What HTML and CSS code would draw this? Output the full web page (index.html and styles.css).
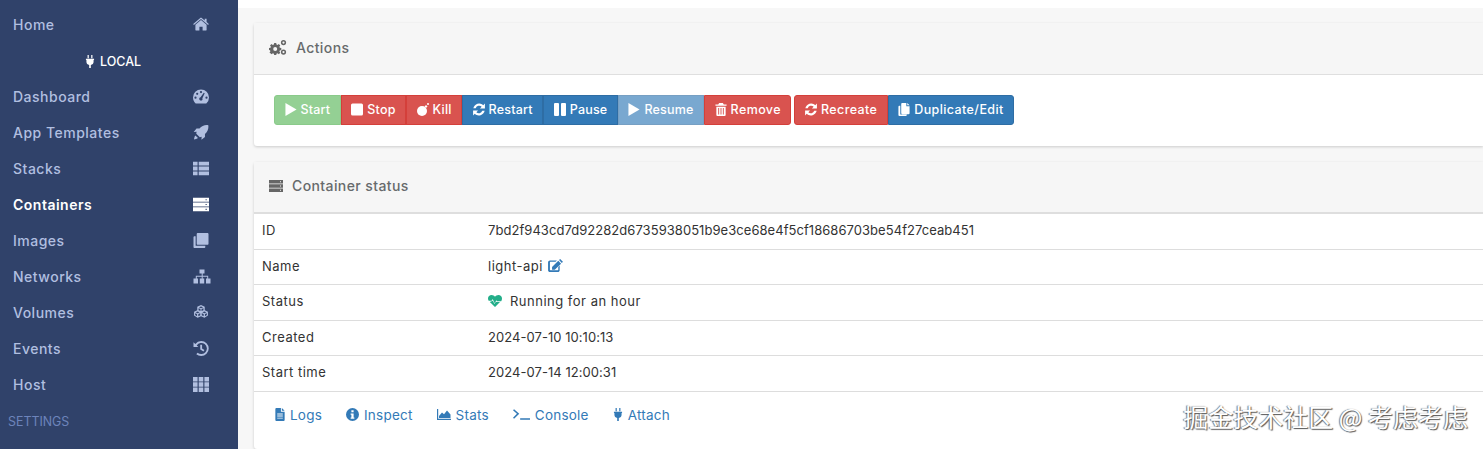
FILE: index.html
```html
<!DOCTYPE html>
<html lang="en">
<head>
<meta charset="utf-8">
<title>Container details</title>
<link rel="stylesheet" href="styles.css">
</head>
<body>
<svg class="defs" width="0" height="0" aria-hidden="true">
  <defs>
    <symbol id="i-home" viewBox="0 0 16 14"><path d="M8 2.600 2.400 7.300V12.400c0 .3.200.5.500.5H6.400V9.300h3.200v3.600h3.500c.3 0 .5-.2.500-.5V7.300zM15.800 6.500 13.600 4.600V1.200h-1.900v1.800L9 .7C8.400.2 7.600.2 7 .7L.2 6.500l.7.900L8 1.600l7.100 5.800z"/></symbol>
    <symbol id="i-plug" viewBox="0 0 12 16"><path d="M3 0h1.500v4H3zM7.500 0H9v4H7.500zM1 4.500h10V6h-.6v2.200c0 2-1.400 3.700-3.400 4V16H5v-3.800c-2-.3-3.400-2-3.400-4V6H1z"/></symbol>
    <symbol id="i-gauge" viewBox="0 0 16 14"><path fill-rule="evenodd" d="M8 0a8 8 0 0 0-8 8c0 2.400 1 4.500 2.700 6h10.600A8 8 0 0 0 16 8a8 8 0 0 0-8-8zM2.500 9.300a1.100 1.100 0 1 1 0-2.200 1.100 1.100 0 0 1 0 2.200zM4.200 5.400a1.100 1.100 0 1 1 0-2.200 1.100 1.100 0 0 1 0 2.200zM8 3.700a1.100 1.100 0 1 1 0-2.200 1.100 1.100 0 0 1 0 2.200zM13.500 9.300a1.100 1.100 0 1 1 0-2.200 1.100 1.100 0 0 1 0 2.200zM9.500 10.200a1.700 1.700 0 0 1-3 0 1.700 1.700 0 0 1 1-2.400L10.800 3.200l.9.500-2.300 5z"/></symbol>
    <symbol id="i-rocket" viewBox="0 0 14 14"><path d="M13.800.2C10.500-.3 7.700.9 5.600 3.300H2.800L.2 6.600l2.800-.2c-.3.700-.4 1.300-.4 1.700l3.300 3.300c.5 0 1-.2 1.700-.4l-.2 2.800 3.300-2.600V8.400c2.400-2.100 3.600-4.900 3.100-8.200zM1.800 9.800C.9 10.700.6 12.500.5 13.500c1-.1 2.800-.4 3.700-1.300z"/></symbol>
    <symbol id="i-table" viewBox="0 0 14 12"><path d="M0 0h4v3.400H0zM5 0h9v3.400H5zM0 4.300h4v3.400H0zM5 4.300h9v3.400H5zM0 8.600h4V12H0zM5 8.600h9V12H5z"/></symbol>
    <symbol id="i-server" viewBox="0 0 14 12"><path fill-rule="evenodd" d="M0 0h14v3.500H0zM0 4.200h14v3.600H0zM0 8.500h14V12H0zM11 1.300v1h1v-1zM11 5.500v1h1v-1zM11 9.800v1h1v-1z"/></symbol>
    <symbol id="i-clone" viewBox="0 0 14 14"><path d="M4 0h9c.6 0 1 .4 1 1v9c0 .6-.4 1-1 1H4c-.6 0-1-.4-1-1V1c0-.6.4-1 1-1zM2 3v9h9v1c0 .6-.4 1-1 1H1c-.6 0-1-.4-1-1V4c0-.6.4-1 1-1z"/></symbol>
    <symbol id="i-copy" viewBox="0 0 12 14"><path d="M4 0h4.500v3.500H12V11c0 .5-.4 1-1 1H4c-.6 0-1-.5-1-1V1c0-.6.4-1 1-1zM9.500 0 12 2.500H9.500zM2 3v9.500h7V13c0 .6-.4 1-1 1H1c-.6 0-1-.4-1-1V4c0-.6.4-1 1-1z"/></symbol>
    <symbol id="i-sitemap" viewBox="0 0 18 14"><path d="M6.500 0h5v4H9.700v2.200H15.200V9H17.500v5h-4.500V9h1.200V7.200H9.700V9H11.200v5H6.800V9h1.900V7.200H3.800V9H5v5H.5V9h2.300V6.200h5.900V4H6.500z"/></symbol>
    <symbol id="i-cubes" viewBox="0 0 15 14"><path fill-rule="evenodd" d="M7.500 0 11 1.500v3.400l3 1.300v3.700L10.700 12 7.500 10.400 4.300 12 1 9.900V6.200l3-1.300V1.500zM7.500 1.300 5.500 2.100l2 .8 2-.8zM4.300 6 2.400 6.800l1.900.8 1.900-.8zM10.700 6l-1.900.8 1.900.8 1.900-.8zM2 7.700v1.700l1.800 1.100V8.400zM5 8.400v2.100l1.800-1V7.600zM8.200 7.600v1.900l1.800 1V8.400zM13 7.700l-1.800.7v2.100l1.800-1.100zM5.200 3v1.900l1.800.7V3.700zM9.800 3 8 3.700v1.900l1.800-.7z"/></symbol>
    <symbol id="i-history" viewBox="0 0 14 14"><path d="M7.200 0A7 7 0 0 1 7.200 14 7 7 0 0 1 2.600 12.300l1.200-1.400A5.200 5.200 0 1 0 3 4.100L4.600 5.700H0V1.100L1.700 2.800A7 7 0 0 1 7.200 0zM6.300 3.500H8V7l2.200 1.400-.9 1.400-3-1.900z"/></symbol>
    <symbol id="i-th" viewBox="0 0 14 13"><path d="M0 0h4v3.800H0zM5 0h4v3.800H5zM10 0h4v3.800h-4zM0 4.600h4v3.800H0zM5 4.600h4v3.800H5zM10 4.600h4v3.800h-4zM0 9.200h4V13H0zM5 9.200h4V13H5zM10 9.200h4V13h-4z"/></symbol>
    <symbol id="i-cogs" viewBox="0 0 18 15"><path fill-rule="evenodd" d="M5.200 3h2l.3 1.500 1 .4L9.800 4l1.500 1.500-.9 1.300.4 1 1.500.3v2l-1.500.3-.4 1 .9 1.300-1.500 1.500-1.300-.9-1 .4-.3 1.500h-2l-.3-1.500-1-.4-1.300.9L.5 12.500l.9-1.300-.4-1L0 10V8l1.500-.3.400-1-.9-1.300L2.500 4l1.300.9 1-.4zM6.200 7a2 2 0 1 0 0 4 2 2 0 0 0 0-4zM14.500 0a2.600 2.600 0 1 1 0 5.200 2.600 2.600 0 0 1 0-5.200zM14.500 1.500a1.100 1.100 0 1 0 0 2.200 1.100 1.100 0 0 0 0-2.200zM14.500 9.500a2.600 2.600 0 1 1 0 5.200 2.600 2.600 0 0 1 0-5.200zM14.500 11a1.100 1.100 0 1 0 0 2.200 1.100 1.100 0 0 0 0-2.200z"/></symbol>
    <symbol id="i-play" viewBox="0 0 12 14"><path d="M0 0 12 7 0 14z"/></symbol>
    <symbol id="i-stop" viewBox="0 0 12 12"><rect width="12" height="12" rx="1.500"/></symbol>
    <symbol id="i-bomb" viewBox="0 0 12 13"><circle cx="5" cy="8" r="5"/><path d="M7.500 3.500 9 2l1.500 1.500L9 5z"/><circle cx="11" cy="1" r="1"/></symbol>
    <symbol id="i-refresh" viewBox="0 0 14 14"><path d="M13.900 0v5.800H8.100l2-2A4.200 4.200 0 0 0 3.200 5.400H.4a7 7 0 0 1 11.600-3.500zM.1 14V8.200h5.800l-2 2a4.200 4.200 0 0 0 6.900-1.600h2.800a7 7 0 0 1-11.600 3.500z"/></symbol>
    <symbol id="i-pause" viewBox="0 0 12 13"><rect width="5" height="13" rx="1"/><rect x="7" width="5" height="13" rx="1"/></symbol>
    <symbol id="i-trash" viewBox="0 0 12 14"><path fill-rule="evenodd" d="M4 0h4l1 1.500h3V3H0V1.500h3zM1 4h10v9c0 .6-.4 1-1 1H2c-.6 0-1-.4-1-1zM3 5.500v7h1v-7zM5.500 5.500v7h1v-7zM8 5.500v7h1v-7z"/></symbol>
    <symbol id="i-edit" viewBox="0 0 16 14"><path d="M2 1.500h7.500L8 3H2.500c-.3 0-.5.200-.5.500v8c0 .3.200.5.500.5h8c.3 0 .5-.2.500-.5V8.500l1.500-1.500v5c0 1.100-.9 2-2 2H2c-1.100 0-2-.9-2-2V3.500c0-1.100.9-2 2-2zM13 0l3 3-1.200 1.200-3-3zM11 2l3 3-6.800 6.500H4.300V8.500z"/></symbol>
    <symbol id="i-heartbeat" viewBox="0 0 14 12"><path d="M3.600 0C1.600 0 0 1.500 0 3.500c0 .8.300 1.500.7 2.200h3l1-1.800L6.600 8.200l1.800-3 .6 1.100h4.200c.5-.8.800-1.700.8-2.800C14 1.500 12.400 0 10.400 0 9 0 7.800.7 7 1.800 6.200.7 5 0 3.600 0zM1.800 7 7 12l5-5H8.300l-.3-.5-1.500 2.500-1.800-3.600-.3.600z"/></symbol>
    <symbol id="i-file" viewBox="0 0 10 14"><path fill-rule="evenodd" d="M0 1c0-.6.400-1 1-1h5v4h4v9c0 .6-.4 1-1 1H1c-.6 0-1-.4-1-1zM7 0l3 3H7zM2 6v1h6V6zM2 8.200v1h6v-1zM2 10.400v1h6v-1z"/></symbol>
    <symbol id="i-info" viewBox="0 0 14 14"><path fill-rule="evenodd" d="M7 0a7 7 0 1 1 0 14A7 7 0 0 1 7 0zM5.800 2.300v2.200h2.400V2.300zM5 5.800v1.400h.8v3H5v1.400h4v-1.400h-.8V5.800z"/></symbol>
    <symbol id="i-chart" viewBox="0 0 14 11"><path d="M0 0h1.200v9.700H14V11H0zM2 9V7L5 3.500l2 1.700L10 1.500l3.500 4V9z"/></symbol>
    <symbol id="i-terminal" viewBox="0 0 19 12"><path d="M1.200 0 7 5.200 1.200 10.800 0 9.500 4.400 5.200 0 1.300zM8 10.200h11V12H8z"/></symbol>
  </defs>
</svg>

<div class="layout">
  <nav class="sidebar">
    <a class="nav-row">Home<svg class="nav-icon"><use href="#i-home"/></svg></a>
    <div class="endpoint"><svg class="endpoint-icon"><use href="#i-plug"/></svg>LOCAL</div>
    <a class="nav-row">Dashboard<svg class="nav-icon"><use href="#i-gauge"/></svg></a>
    <a class="nav-row">App Templates<svg class="nav-icon"><use href="#i-rocket"/></svg></a>
    <a class="nav-row">Stacks<svg class="nav-icon"><use href="#i-table"/></svg></a>
    <a class="nav-row active">Containers<svg class="nav-icon"><use href="#i-server"/></svg></a>
    <a class="nav-row">Images<svg class="nav-icon"><use href="#i-clone"/></svg></a>
    <a class="nav-row">Networks<svg class="nav-icon nav-icon-wide"><use href="#i-sitemap"/></svg></a>
    <a class="nav-row">Volumes<svg class="nav-icon"><use href="#i-cubes"/></svg></a>
    <a class="nav-row">Events<svg class="nav-icon"><use href="#i-history"/></svg></a>
    <a class="nav-row">Host<svg class="nav-icon"><use href="#i-th"/></svg></a>
    <div class="nav-title">SETTINGS</div>
  </nav>

  <main class="content">
    <section class="widget widget-actions">
      <header class="widget-head"><svg class="head-icon head-cogs"><use href="#i-cogs"/></svg>Actions</header>
      <div class="actions-body">
        <div class="btn-group">
          <a class="btn green dim"><svg><use href="#i-play"/></svg>Start</a>
          <a class="btn red"><svg><use href="#i-stop"/></svg>Stop</a>
          <a class="btn red"><svg><use href="#i-bomb"/></svg>Kill</a>
          <a class="btn blue"><svg><use href="#i-refresh"/></svg>Restart</a>
          <a class="btn blue"><svg><use href="#i-pause"/></svg>Pause</a>
          <a class="btn blue dim"><svg><use href="#i-play"/></svg>Resume</a>
          <a class="btn red btn-wide"><svg><use href="#i-trash"/></svg>Remove</a>
        </div>
        <div class="btn-group">
          <a class="btn red btn-wide"><svg><use href="#i-refresh"/></svg>Recreate</a>
          <a class="btn blue btn-wide"><svg><use href="#i-copy"/></svg>Duplicate/Edit</a>
        </div>
      </div>
    </section>

    <section class="widget widget-status">
      <header class="widget-head"><svg class="head-icon head-server"><use href="#i-server"/></svg>Container status</header>
      <div class="info-table">
        <div class="row"><span class="key">ID</span><span class="digits">7bd2f943cd7d92282d6735938051b9e3ce68e4f5cf18686703be54f27ceab451</span></div>
        <div class="row"><span class="key">Name</span><span class="val">light-api <svg class="edit-icon"><use href="#i-edit"/></svg></span></div>
        <div class="row"><span class="key">Status</span><span class="val"><svg class="heart-icon"><use href="#i-heartbeat"/></svg>Running for an hour</span></div>
        <div class="row"><span class="key">Created</span><span class="digits">2024-07-10 10:10:13</span></div>
        <div class="row"><span class="key">Start time</span><span class="digits">2024-07-14 12:00:31</span></div>
      </div>
      <div class="links">
        <a class="link"><svg class="ic-file"><use href="#i-file"/></svg>Logs</a>
        <a class="link"><svg class="ic-info"><use href="#i-info"/></svg>Inspect</a>
        <a class="link"><svg class="ic-chart"><use href="#i-chart"/></svg>Stats</a>
        <a class="link"><svg class="ic-term"><use href="#i-terminal"/></svg>Console</a>
        <a class="link"><svg class="ic-plug"><use href="#i-plug"/></svg>Attach</a>
      </div>
    </section>
  </main>
</div>
<div class="watermark">掘金技术社区 @ 考虑考虑</div>
</body>
</html>
```

FILE: styles.css
```css
* { box-sizing: border-box; }
html, body { margin: 0; height: 449px; overflow: hidden; }
body { font-family: Inter, "Noto Sans", sans-serif; background: #fff; color: #333; position: relative; }
.defs { position: absolute; }
svg { fill: currentColor; display: block; flex: none; }

.layout { display: flex; height: 449px; }

.sidebar { width: 238px; flex: none; background: #30426a; padding-top: 6.500px; }
.nav-row { display: flex; align-items: center; justify-content: space-between; height: 36px; padding: 0 28px 1px 13px; color: #b1bfe0; font-size: 14px; font-weight: 500; letter-spacing: .5px; }
.nav-row.active { color: #fff; font-weight: 600; }
.nav-icon { width: 16px; height: 15px; margin-right: 1px; }
.nav-icon-wide { width: 18px; margin-right: -1px; }
.endpoint { display: flex; align-items: center; justify-content: center; gap: 5px; height: 36px; color: #fff; font-size: 12.500px; font-weight: 500; padding: 1px 12px 0 0; }
.endpoint-icon { width: 10px; height: 13px; }
.nav-title { height: 36px; display: flex; align-items: center; padding: 1px 0 0 8px; color: #6d84bb; font-size: 12.400px; }

.content { flex: 1; min-width: 0; display: flex; flex-direction: column; background: #f7f7f7; border-top: 8px solid #fff; padding: 15px 0 0 16px; }
.widget { background: #fff; box-shadow: 0 1px 3px rgba(0,0,0,.18); border-radius: 3px 0 0 3px; }
.widget-actions { margin-bottom: 16px; }
.widget-status { flex: 1; }
.widget-head { display: flex; align-items: center; background: #f6f6f6; border-bottom: 1px solid #dfdfdf; color: #676a6c; font-size: 14px; font-weight: 500; letter-spacing: .4px; height: 52px; padding: 0 0 2px 15px; }
.widget-status .widget-head { border-bottom: 2px solid #dedede; padding-bottom: 3px; }
.head-icon { color: #666; }
.head-cogs { width: 18px; height: 15px; margin-right: 9px; }
.head-server { width: 14px; height: 12px; margin-right: 9px; }

.actions-body { display: flex; gap: 3px; padding: 20px; height: 71px; }
.btn-group { display: flex; height: 30px; }
.btn { display: flex; align-items: center; height: 30px; padding: 0 9.500px 1px; gap: 4px; color: #fff; font-size: 12.500px; font-weight: 500; letter-spacing: .2px; border: 1px solid transparent; white-space: nowrap; }
.btn-wide { letter-spacing: .4px; }
.btn svg { height: 13px; width: 12px; }
.btn-group .btn:first-child { border-radius: 3px 0 0 3px; }
.btn-group .btn:last-child { border-radius: 0 3px 3px 0; }
.green { background: #5cb85c; border-color: #4cae4c; }
.red { background: #d9534f; border-color: #d43f3a; }
.blue { background: #337ab7; border-color: #2e6da4; }
.dim { opacity: .65; }

.info-table { font-size: 13px; letter-spacing: .5px; }
.row { display: flex; align-items: center; height: 35.500px; border-bottom: 1px solid #ddd; padding: 0 0 2px 8px; color: #333; }
.key { width: 226px; flex: none; }
.digits { letter-spacing: .05px; }
.val { display: flex; align-items: center; white-space: pre; }
.edit-icon { width: 15px; height: 13px; margin-left: 1px; color: #337ab7; }
.heart-icon { width: 14px; height: 12px; margin-right: 8px; color: #23ae89; }

.links { display: flex; gap: 24px; padding: 15px 21px 0; font-size: 13.500px; letter-spacing: .22px; color: #337ab7; }
.link { display: flex; align-items: center; gap: 5px; }
.ic-file { width: 10px; height: 13px; }
.ic-info { width: 13px; height: 13px; }
.ic-chart { width: 14px; height: 11px; }
.ic-term { width: 17px; height: 11px; }
.ic-plug { width: 10px; height: 13px; }

.watermark { position: absolute; right: 15px; top: 401px; font-family: "Noto Sans CJK SC", sans-serif; font-size: 25px; line-height: 30px; color: #fff; text-shadow: 1px 1px 1px #555, -1px 0 1px #777; white-space: nowrap; }
```
